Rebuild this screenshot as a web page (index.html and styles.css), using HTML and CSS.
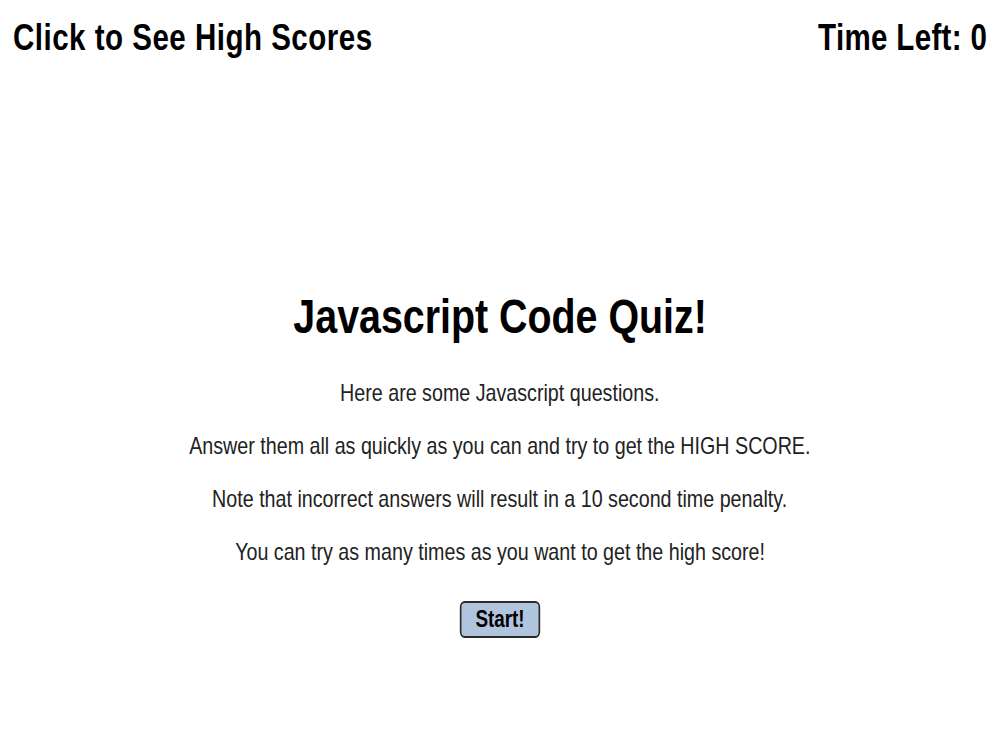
FILE: index.html
```html
<!DOCTYPE html>
<html lang="en">
<head>
<meta charset="utf-8">
<title>Javascript Code Quiz</title>
<link rel="stylesheet" href="styles.css">
</head>
<body>
<header class="topbar">
  <a class="scores-link narrow narrow-left" href="#">Click to See High Scores</a>
  <div class="timer narrow narrow-right">Time Left: <span class="time-value">0</span></div>
</header>
<main class="intro">
  <h1 class="intro-title narrow">Javascript Code Quiz!</h1>
  <p class="intro-text narrow">Here are some Javascript questions.</p>
  <p class="intro-text narrow">Answer them all as quickly as you can and try to get the HIGH SCORE.</p>
  <p class="intro-text narrow">Note that incorrect answers will result in a 10 second time penalty.</p>
  <p class="intro-text intro-last narrow">You can try as many times as you want to get the high score!</p>
  <button class="start-btn narrow" type="button">Start!</button>
</main>
</body>
</html>
```

FILE: styles.css
```css
html, body {
  margin: 0;
  padding: 0;
  background: #ffffff;
}

body {
  font-family: "Liberation Sans", Arial, sans-serif;
  color: #000;
  width: 1000px;
  height: 750px;
  overflow: hidden;
}

/* narrow (Arial Narrow-like) rendering of the text */
.narrow {
  transform: scaleX(0.82);
  transform-origin: 50% 50%;
}

.narrow-left {
  transform-origin: 0 50%;
}

.narrow-right {
  transform-origin: 100% 50%;
}

.topbar {
  display: flex;
  justify-content: space-between;
  align-items: flex-start;
  padding: 17px 13px 0 13px;
}

.scores-link,
.timer {
  display: inline-block;
  font-size: 36px;
  line-height: 41px;
  font-weight: bold;
  letter-spacing: 0.6px;
  color: #000;
  text-decoration: none;
}

.timer {
  letter-spacing: 0.4px;
}

.intro {
  display: flex;
  flex-direction: column;
  align-items: center;
  margin-top: 231px;
}

.intro-title {
  margin: 0 0 35px 0;
  font-size: 48px;
  line-height: 55px;
  font-weight: bold;
  color: #000;
}

.intro-text {
  margin: 0 0 25px 0;
  font-size: 24px;
  line-height: 28px;
  color: #222;
}

.intro-last {
  margin-bottom: 35px;
}

.start-btn {
  box-sizing: border-box;
  height: 37px;
  padding: 0 17px;
  font-family: inherit;
  font-size: 23px;
  font-weight: bold;
  color: #000;
  background: #b0c4de;
  border: 2px solid #2a2a2a;
  border-radius: 6px;
}
```
